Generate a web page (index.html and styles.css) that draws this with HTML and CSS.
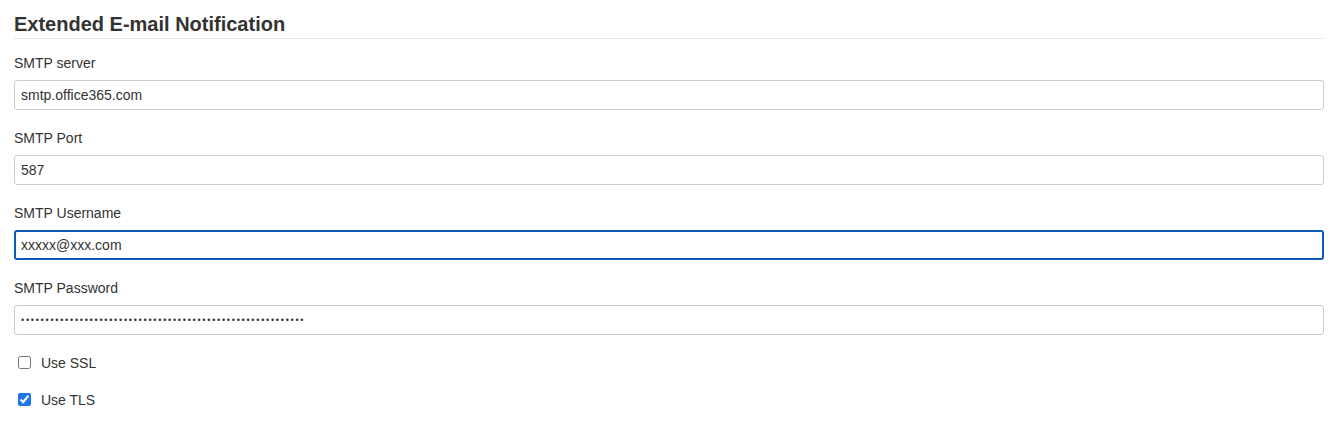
FILE: index.html
```html
<!DOCTYPE html>
<html>
<head>
<meta charset="utf-8">
<link rel="stylesheet" href="styles.css">
</head>
<body>
<div class="page">
  <h2 class="section-title">Extended E-mail Notification</h2>
  <div class="field">
    <label class="field-label">SMTP server</label>
    <input class="text-input" type="text" value="smtp.office365.com">
  </div>
  <div class="field">
    <label class="field-label">SMTP Port</label>
    <input class="text-input" type="text" value="587">
  </div>
  <div class="field">
    <label class="field-label">SMTP Username</label>
    <input class="text-input focused" type="text" value="xxxxx@xxx.com">
  </div>
  <div class="field field-last">
    <label class="field-label">SMTP Password</label>
    <input class="text-input password" type="password" value="xxxxxxxxxxxxxxxxxxxxxxxxxxxxxxxxxxxxxxxxxxxxxxxxxxxxxxxxxx">
  </div>
  <div class="check-row">
    <input class="check" type="checkbox" id="ssl">
    <label class="check-label" for="ssl">Use SSL</label>
  </div>
  <div class="check-row">
    <input class="check" type="checkbox" id="tls" checked>
    <label class="check-label" for="tls">Use TLS</label>
  </div>
</div>
</body>
</html>
```

FILE: styles.css
```css
html, body {
  margin: 0;
  padding: 0;
  background: #ffffff;
}
body {
  font-family: "Liberation Sans", Arial, sans-serif;
  color: #333333;
}
.page {
  padding: 12px 15px 0 14px;
}
.section-title {
  margin: 0;
  font-size: 20px;
  line-height: 24px;
  font-weight: bold;
  color: #333333;
  padding-bottom: 2px;
  border-bottom: 1px solid #e5e5e5;
  margin-bottom: 14px;
}
.field {
  display: flex;
  flex-direction: column;
  padding-bottom: 18px;
}
.field-last {
  padding-bottom: 9px;
}
.field-label {
  font-size: 14px;
  line-height: 20px;
  color: #333333;
  margin-bottom: 7px;
}
.text-input {
  box-sizing: border-box;
  height: 30px;
  width: 100%;
  margin: 0;
  border: 1px solid #cccccc;
  border-radius: 3px;
  padding: 0 6px;
  font-family: "Liberation Sans", Arial, sans-serif;
  font-size: 14px;
  color: #333333;
  background: #ffffff;
  outline: none;
}
.text-input.focused {
  border: 2px solid #0b5bb8;
  padding: 0 5px;
}
.text-input.password {
  font-size: 9px;
  letter-spacing: 1.75px;
}
.check-row {
  display: flex;
  align-items: center;
  height: 37px;
}
.check {
  margin: 0 0 0 4px;
  width: 13px;
  height: 13px;
  accent-color: #1f74e6;
}
.check-label {
  font-size: 14px;
  color: #333333;
  margin-left: 10px;
}
```
